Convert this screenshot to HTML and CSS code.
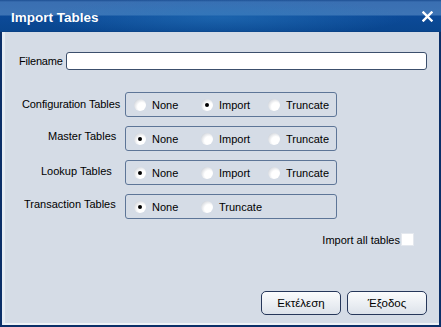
FILE: index.html
```html
<!doctype html>
<html lang="en">
<head>
  <meta charset="utf-8">
  <title>Import Tables</title>
  <link rel="stylesheet" href="styles.css">
</head>
<body>
  <div class="window">
    <div class="titlebar">
      <span class="title">Import Tables</span>
      <svg class="close" width="11" height="11" viewBox="0 0 11 11"><path d="M1.5 1.5L9.5 9.5M9.5 1.5L1.5 9.5" stroke="#fff" stroke-width="2.4" stroke-linecap="square"/></svg>
    </div>
    <div class="content">
      <div class="file-row">
        <label for="fname">Filename</label>
        <input id="fname" type="text">
      </div>

      <div class="groups">
        <div class="grow">
          <span class="glabel lb-config">Configuration Tables</span>
          <div class="gbox">
            <span class="opt"><span class="radio"></span>None</span>
            <span class="opt"><span class="radio on"></span>Import</span>
            <span class="opt"><span class="radio"></span>Truncate</span>
          </div>
        </div>
        <div class="grow">
          <span class="glabel lb-master">Master Tables</span>
          <div class="gbox">
            <span class="opt"><span class="radio on"></span>None</span>
            <span class="opt"><span class="radio"></span>Import</span>
            <span class="opt"><span class="radio"></span>Truncate</span>
          </div>
        </div>
        <div class="grow">
          <span class="glabel lb-lookup">Lookup Tables</span>
          <div class="gbox">
            <span class="opt"><span class="radio on"></span>None</span>
            <span class="opt"><span class="radio"></span>Import</span>
            <span class="opt"><span class="radio"></span>Truncate</span>
          </div>
        </div>
        <div class="grow">
          <span class="glabel lb-trans">Transaction Tables</span>
          <div class="gbox">
            <span class="opt"><span class="radio on"></span>None</span>
            <span class="opt"><span class="radio"></span>Truncate</span>
          </div>
        </div>
      </div>

      <div class="all-row">
        <span>Import all tables</span>
        <span class="check"></span>
      </div>

      <div class="buttons">
        <button type="button">Εκτέλεση</button>
        <button type="button">Έξοδος</button>
      </div>
    </div>
  </div>
</body>
</html>
```

FILE: styles.css
```css
body{margin:0;background:#fff;font-family:"Liberation Sans",Arial,sans-serif;font-size:11px;color:#000}
.window{width:441px;height:327px;box-sizing:border-box;background:#0b2f68;padding:0 2px 2px 2px;display:flex;flex-direction:column}
.titlebar{height:32px;flex:none;display:flex;align-items:center;justify-content:space-between;padding:0 8px 0 11px;margin:0 -2px;
  background:radial-gradient(ellipse 60% 90% at 50% 55%,rgba(40,120,190,.55),rgba(40,120,190,0) 70%),linear-gradient(#1d4f93 0,#3a6fb2 2px,#3d74b5 15px,#0c4a98 16px,#09468f 31px,#0a3c7c 32px)}
.title{color:#fff;font-weight:bold;font-size:13.5px;padding-top:2px}
.close{display:block;margin-top:1px}
.content{flex:1;background:#d5dce6;border-left:3px solid #e6ecf3;border-bottom:2px solid #eef2f6;padding:20px 12px 0 14px;display:flex;flex-direction:column}
.file-row{display:flex;align-items:center;gap:3px}
.file-row label{letter-spacing:-0.2px}
.file-row input{flex:1;height:18px;box-sizing:border-box;border:1px solid #3c4f6c;border-radius:3px;background:#fff;margin:0;padding:0 3px;font:inherit}
.groups{display:flex;flex-direction:column;gap:9px;margin-top:22px}
.grow{display:flex;align-items:flex-start}
.glabel{width:106px;flex:none;box-sizing:border-box;line-height:14px;white-space:nowrap}
.lb-config{padding-left:3px;padding-top:5px;letter-spacing:-0.1px}
.lb-master{padding-left:29px;padding-top:3px}
.lb-lookup{padding-left:22px;padding-top:4px}
.lb-trans{padding-left:5px;padding-top:3px}
.gbox{width:212px;height:25px;box-sizing:border-box;border:1px solid #5d7597;border-radius:3px;display:flex;align-items:center;padding:0 0 0 8px}
.opt{width:67px;display:flex;align-items:center;gap:6px;flex:none;padding-top:1px}
.radio{width:12px;height:12px;box-sizing:border-box;border-radius:50%;flex:none;position:relative;
  background:radial-gradient(circle at 65% 65%,#fff 0,#fff 38%,#dadde2 72%,#aeb4bd 100%)}
.radio.on::after{content:"";position:absolute;left:4px;top:4px;width:4px;height:4px;border-radius:50%;background:#000}
.all-row{display:flex;align-items:center;justify-content:flex-end;margin-top:14px;padding-right:13px}
.check{width:13px;height:13px;box-sizing:border-box;background:#fff;border:1px solid #e4e8ee;margin-left:1px}
.buttons{display:flex;justify-content:flex-end;gap:6px;margin-top:auto;margin-bottom:8px}
.buttons button{width:80px;height:24px;box-sizing:border-box;border:1px solid #26375a;border-radius:5px;
  background:linear-gradient(#fbfcfd,#e9edf2 60%,#dce2ea);font:inherit;font-size:11.5px;color:#000;padding:0}
```
